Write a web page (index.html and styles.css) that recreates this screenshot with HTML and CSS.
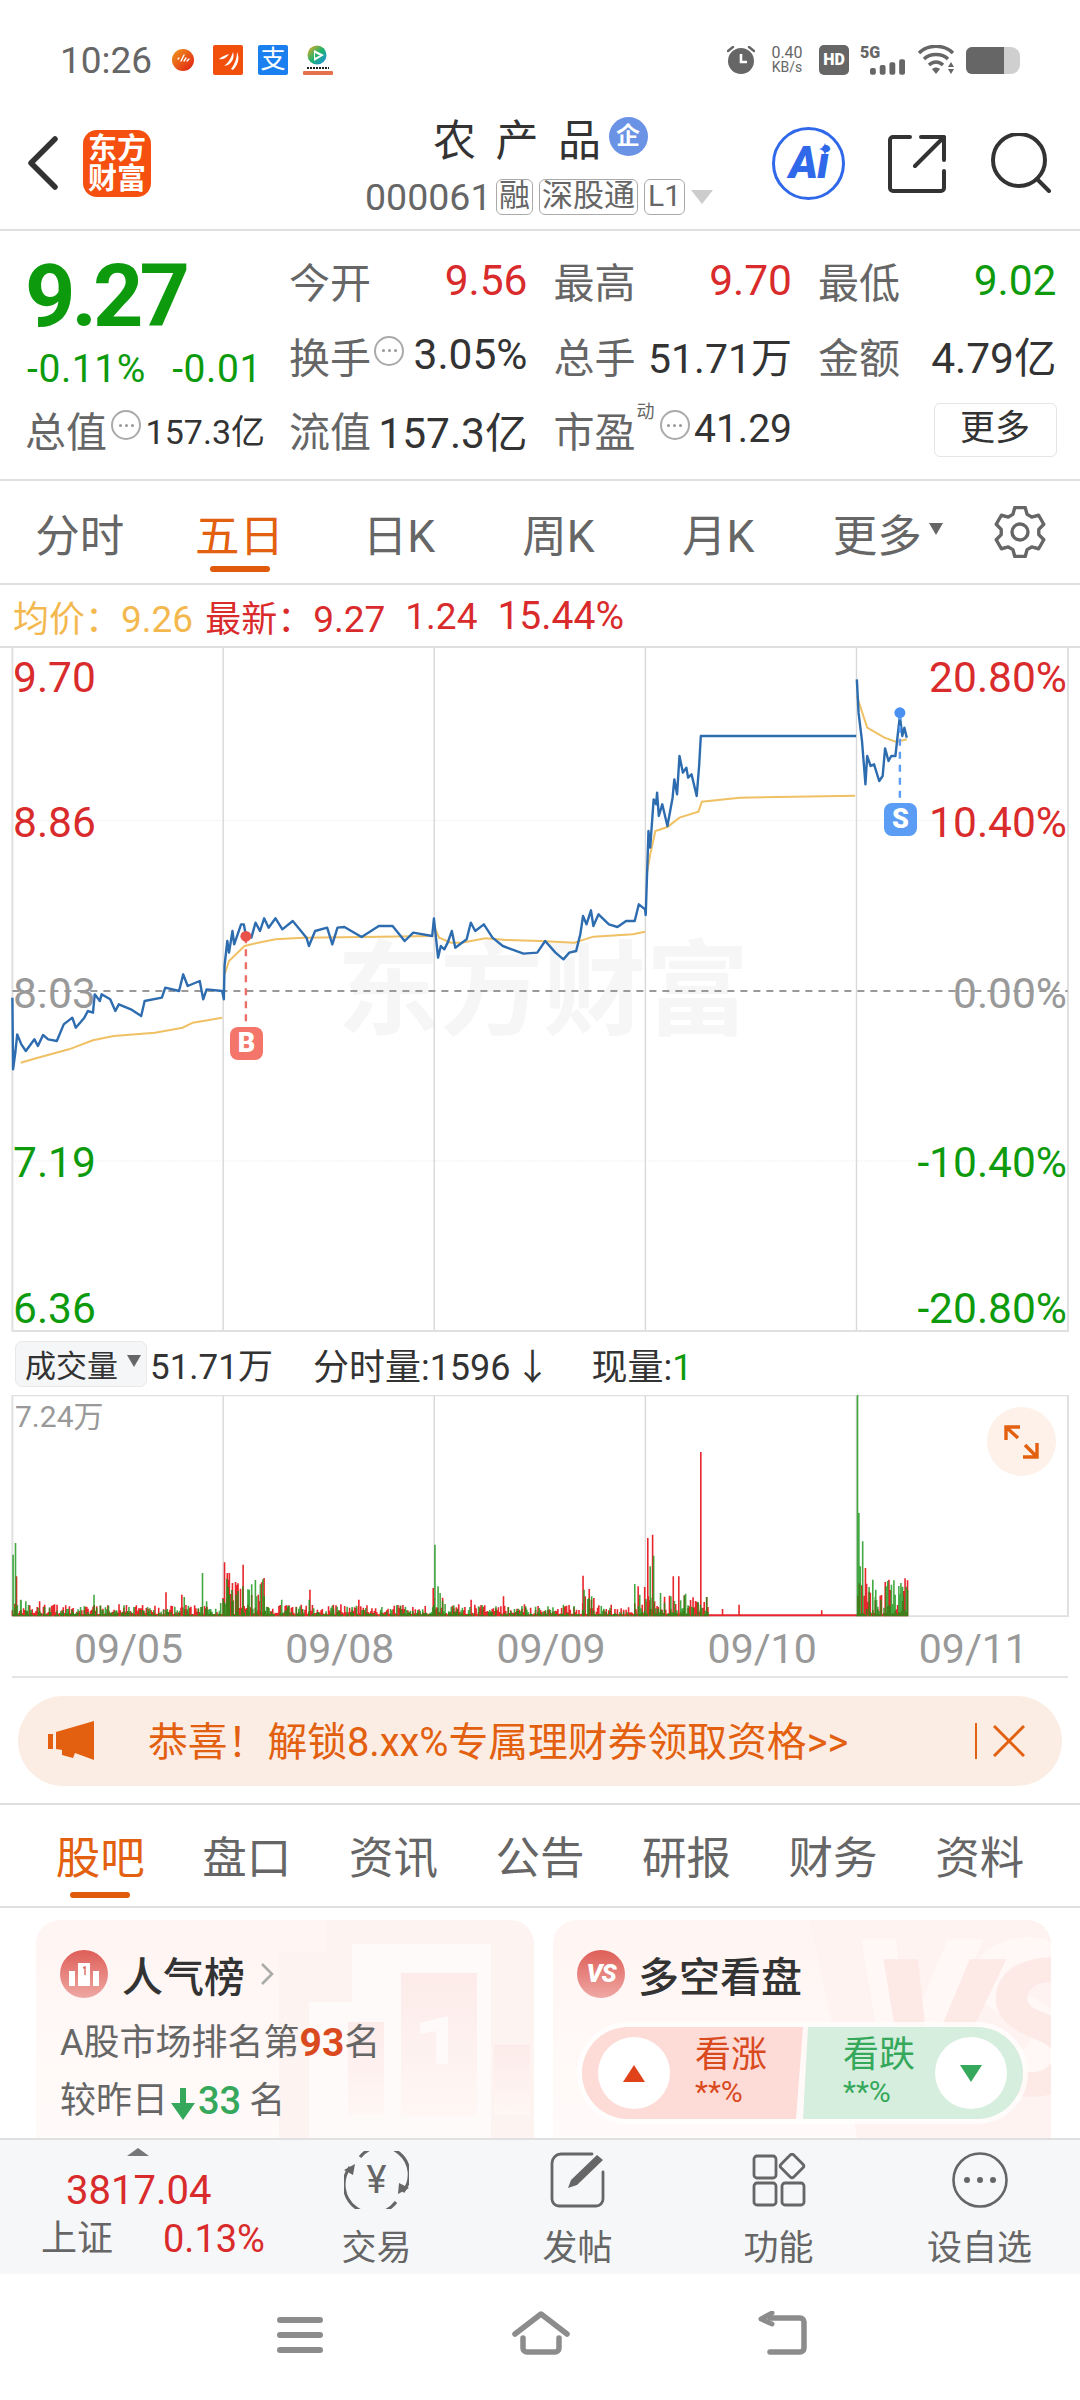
FILE: index.html
```html
<!DOCTYPE html>
<html lang="zh-CN">
<head>
<meta charset="utf-8">
<title>农产品</title>
<link rel="stylesheet" href="styles.css">
</head>
<body>
<div class="page">

<div class="status">
  <span class="time">10:26</span>
  <svg class="si si-dot" viewBox="0 0 22 22"><defs><linearGradient id="gd" x1="0" y1="0" x2="1" y2="1"><stop offset="0" stop-color="#f09a1e"/><stop offset="1" stop-color="#e01a12"/></linearGradient></defs><circle cx="11" cy="11" r="11" fill="url(#gd)"/><path d="M6 10l1-1M9 12l3-6M12 12l2-3M15 12l2-2" stroke="#fff" stroke-width="1.4" stroke-linecap="round"/></svg>
  <svg class="si si-fish" viewBox="0 0 30 30"><rect width="30" height="30" rx="2" fill="#f24e0c"/><path d="M6 14C10 11 13 10 16 9 14 12 11 15 6 14ZM11 21C14 19 18 14 20 7 22 12 19 18 15 20ZM18 24C21 20 24 14 24 7 27 13 25 20 20 25Z" fill="#fff"/></svg>
  <span class="si-pay">支</span>
  <svg class="si si-video" viewBox="0 0 30 30"><defs><linearGradient id="gv" x1="0" y1="0" x2="1" y2="1"><stop offset="0" stop-color="#f7a81e"/><stop offset=".5" stop-color="#1fb36b"/><stop offset="1" stop-color="#1c8df0"/></linearGradient></defs><circle cx="14" cy="10" r="9.5" fill="url(#gv)"/><path d="M11 5l10 5-10 6z" fill="#fff"/><path d="M12 8l5 2.4-5 2.4z" fill="#2ab06a"/><path d="M4 23h22" stroke="#222" stroke-width="2" stroke-dasharray="2 1"/><rect y="26" width="30" height="4" rx="1" fill="#e4704c"/></svg>
  <span class="status-gap"></span>
  <svg class="si si-alarm" viewBox="0 0 28 28"><path d="M1 5l5-4M27 5l-5-4" stroke="#666" stroke-width="2.4" stroke-linecap="round"/><circle cx="14" cy="15" r="13" fill="#666"/><path d="M14 8v8h6" fill="none" stroke="#fff" stroke-width="2.6"/></svg>
  <span class="speed"><span>0.40</span><span class="speed-unit">KB/s</span></span>
  <span class="hd">HD</span>
  <span class="signal"><span class="sig-5g">5G</span><svg class="sig-bars" viewBox="0 0 36 16"><rect x="0" y="9" width="6" height="7" rx="2" fill="#666"/><rect x="10" y="6" width="6" height="10" rx="2" fill="#666"/><rect x="20" y="3" width="6" height="13" rx="2" fill="#666"/><rect x="30" y="0" width="6" height="16" rx="2" fill="#666"/></svg></span>
  <svg class="si si-wifi" viewBox="0 0 37 30"><path d="M1 8C10-1 26-1 35 8M6 14C12 8 24 8 30 14M11 20C15 16 21 16 25 20" fill="none" stroke="#666" stroke-width="3.4"/><path d="M14 24c3-2 5-2 8 0l-4 5z" fill="#666"/><path d="M33 17l3 5h-6zM30 24h6l-3 5z" fill="#666"/></svg>
  <span class="battery"><span class="battery-fill"></span></span>
</div>

<header class="head">
  <div class="head-left">
    <svg class="back" viewBox="0 0 31 54"><path d="M28 3L4 27l24 24" fill="none" stroke="#333" stroke-width="5.5" stroke-linecap="round" stroke-linejoin="round"/></svg>
    <span class="logo"><span>东方</span><span>财富</span></span>
  </div>
  <div class="head-mid">
    <div class="title-row"><span class="title">农产品</span><span class="qi">企</span></div>
    <div class="code-row"><span class="code">000061</span><span class="tag">融</span><span class="tag">深股通</span><span class="tag tag-l">L1</span><span class="tri"></span></div>
  </div>
  <div class="head-right">
    <span class="ai"><span class="ai-text">Ai</span><svg class="ai-star" viewBox="0 0 12 12"><path d="M6 0l1.6 4.4L12 6 7.6 7.6 6 12 4.4 7.6 0 6l4.4-1.6z" fill="#3068ea"/></svg></span>
    <svg class="share" viewBox="0 0 58 58"><path d="M22 2H5a3 3 0 0 0-3 3v48a3 3 0 0 0 3 3h48a3 3 0 0 0 3-3V36M27 31L56 2M33 2h23v23" fill="none" stroke="#333" stroke-width="4" stroke-linecap="round" stroke-linejoin="round"/></svg>
    <svg class="search" viewBox="0 0 60 60"><circle cx="28" cy="27" r="26" fill="none" stroke="#333" stroke-width="4"/><path d="M46 46l12 12" stroke="#333" stroke-width="4" stroke-linecap="round"/></svg>
  </div>
</header>

<section class="quote">
  <div class="quote-left">
    <div class="price">9.27</div>
    <div class="change"><span>-0.11%</span><span>-0.01</span></div>
    <div class="cap"><span class="lbl">总值</span><span class="dots dots-sm"><i></i></span><span class="cap-val">157.3亿</span></div>
  </div>
  <div class="quote-grid">
    <div class="cell"><span class="lbl">今开</span><span class="up">9.56</span></div>
    <div class="cell"><span class="lbl">最高</span><span class="up">9.70</span></div>
    <div class="cell"><span class="lbl">最低</span><span class="dn">9.02</span></div>
    <div class="cell"><span class="lbl-wrap"><span class="lbl">换手</span><span class="dots"><i></i></span></span><span>3.05%</span></div>
    <div class="cell"><span class="lbl">总手</span><span class="val-sm">51.71万</span></div>
    <div class="cell"><span class="lbl">金额</span><span>4.79亿</span></div>
    <div class="cell"><span class="lbl">流值</span><span>157.3亿</span></div>
    <div class="cell"><span class="lbl-wrap"><span class="lbl">市盈</span><span class="dyn">动</span><span class="dots"><i></i></span></span><span class="val-pe">41.29</span></div>
    <div class="cell cell-end"><span class="more-btn">更多</span></div>
  </div>
</section>

<nav class="tabs">
  <span class="tab">分时</span>
  <span class="tab tab-on">五日</span>
  <span class="tab">日K</span>
  <span class="tab">周K</span>
  <span class="tab">月K</span>
  <span class="tab tab-more">更多<i class="tab-tri"></i></span>
  <svg class="gear" viewBox="0 0 52 52"><g transform="translate(26 26)"><polygon points="-7.1,-17.6 -5.2,-24.5 5.2,-24.5 7.1,-17.6 11.7,-14.95 18.6,-16.75 23.8,-7.75 18.8,-2.65 18.8,2.65 23.8,7.75 18.6,16.75 11.7,14.95 7.1,17.6 5.2,24.5 -5.2,24.5 -7.1,17.6 -11.7,14.95 -18.6,16.75 -23.8,7.75 -18.8,2.65 -18.8,-2.65 -23.8,-7.75 -18.6,-16.75 -11.7,-14.95" fill="none" stroke="#666" stroke-width="3.4" stroke-linejoin="round"/><circle r="8" fill="none" stroke="#666" stroke-width="3.4"/></g></svg>
</nav>

<div class="legend">
  <span class="yellow avg">均价：<span class="num">9.26</span></span>
  <span class="up latest">最新：<span class="num">9.27</span></span>
  <span class="up latest num">1.24</span>
  <span class="up num-wide">15.44%</span>
</div>

<section class="chart">
  <span class="watermark">东方财富</span>
  <svg class="chart-svg" viewBox="0 21 3136 2052" preserveAspectRatio="none">
    <g class="grid-dot"><path d="M36 538H3104M36 1560H3104"/></g>
    <g class="grid-v"><path d="M648 21V2073M1261 21V2073M1874 21V2073M2487 21V2073"/></g>
    <g class="grid-edge"><path d="M36 21V2070H3101V21"/></g>
    <path class="base" d="M36 1050H3100"/>
    <polyline class="avg-line" points="60,1265 110,1250 200,1225 270,1198 330,1185 450,1175 530,1160 560,1145 645,1130"/>
    <polyline class="avg-line" points="652,1000 665,960 710,915 750,905 800,895 880,890 1050,888 1258,885"/>
    <polyline class="avg-line" points="1262,860 1275,890 1310,905 1340,905 1410,892 1470,897 1568,900 1668,905 1698,895 1723,887 1838,880 1873,872"/>
    <polyline class="avg-line" points="1878,700 1888,640 1903,570 1938,558 1973,530 2028,512 2038,482 2148,470 2483,464"/>
    <polyline class="avg-line" points="2488,165 2518,260 2568,290 2603,303 2633,295"/>
    <polyline class="px-line" points="36,1070 38,1285 45,1230 50,1180 62,1210 75,1230 100,1195 110,1215 125,1182 140,1195 165,1200 185,1150 210,1130 220,1160 245,1130 255,1110 270,1115 275,1060 290,1080 295,1060 320,1075 335,1110 345,1090 380,1105 410,1125 420,1080 470,1070 480,1040 520,1050 532,1000 545,1035 580,1020 590,1075 600,1045 645,1050 650,1075 652,975 660,900 665,935 675,870 680,910 700,850 708,850 715,890 730,890 742,845 755,870 767,832 780,860 800,832 820,865 850,840 890,890 897,915 915,870 950,860 965,910 980,860 1000,858 1050,888 1100,855 1140,855 1175,900 1200,875 1255,885 1260,832 1272,950 1280,915 1290,925 1300,905 1312,870 1322,920 1355,895 1367,845 1380,870 1405,850 1430,890 1460,915 1520,938 1560,935 1583,900 1613,935 1636,955 1653,935 1673,930 1685,880 1693,825 1703,850 1716,808 1723,855 1738,820 1768,850 1793,858 1818,840 1843,840 1855,790 1873,805 1875,822 1883,570 1888,620 1898,475 1905,490 1908,455 1913,525 1923,490 1938,555 1953,470 1958,415 1966,460 1973,345 1983,395 1993,380 1998,410 2008,400 2023,465 2030,375 2035,285 2486,285"/>
    <polyline class="px-line" points="2488,115 2493,215 2503,300 2513,430 2518,345 2528,375 2538,370 2553,420 2563,405 2570,322 2580,360 2588,345 2600,345 2608,270 2613,225 2620,285 2626,260 2633,290"/>
    <path class="mark-b" d="M714 886V1160"/>
    <ellipse cx="714" cy="886" rx="16" ry="16" fill="#e8524a"/>
    <path class="mark-s" d="M2613 215V490"/>
    <ellipse cx="2613" cy="215" rx="16" ry="16" fill="#4a90f0"/>
  </svg>
  <span class="ax ax-l y1 up">9.70</span>
  <span class="ax ax-l y2 up">8.86</span>
  <span class="ax ax-l y3 flat">8.03</span>
  <span class="ax ax-l y4 dn">7.19</span>
  <span class="ax ax-l y5 dn">6.36</span>
  <span class="ax ax-r y1 up">20.80%</span>
  <span class="ax ax-r y2 up">10.40%</span>
  <span class="ax ax-r y3 flat">0.00%</span>
  <span class="ax ax-r y4 dn">-10.40%</span>
  <span class="ax ax-r y5 dn">-20.80%</span>
  <span class="badge badge-b">B</span>
  <span class="badge badge-s">S</span>
</section>

<div class="volbar">
  <span class="vol-select">成交量<i class="vol-tri"></i></span>
  <span class="vol-total">51.71万</span>
  <span class="vol-now">分时量:1596<span class="vol-arrow">↓</span></span>
  <span class="vol-cur">现量:<span class="dn">1</span></span>
</div>

<section class="vol">
  <svg class="vol-svg" viewBox="0 226 3136 666" preserveAspectRatio="none">
    <g class="grid-v"><path d="M648 226V890M1261 226V890M1874 226V890M2487 226V890"/></g>
    <g class="grid-edge"><path d="M36 890V227H3101V890H36"/></g>
    <path id="bars-red" class="bars bars-red" d=""/>
    <path id="bars-green" class="bars bars-green" d=""/>
  </svg>
  <span class="vol-max">7.24万</span>
  <span class="expand"><svg viewBox="0 0 69 69"><path d="M31 31L19 20M19 33V20h14M38 38l12 12M50 36v14H36" fill="none" stroke="#e2600f" stroke-width="3.4"/></svg></span>
</section>

<div class="dates"><span>09/05</span><span>09/08</span><span>09/09</span><span>09/10</span><span>09/11</span></div>

<div class="banner">
  <svg class="horn" viewBox="0 0 46 40"><path d="M0 13h5v15H0zM8 11L46 0v39L27 32l-2 5-11-3v-5l-6-1z" fill="#e2600f"/></svg>
  <span class="banner-text">恭喜！解锁8.xx%专属理财券领取资格&gt;&gt;</span>
  <span class="banner-sep"></span>
  <svg class="banner-x" viewBox="0 0 32 32"><path d="M1 1l30 30M31 1L1 31" stroke="#e2600f" stroke-width="3"/></svg>
</div>

<nav class="tabs2">
  <span class="tab2 tab2-on">股吧</span>
  <span class="tab2">盘口</span>
  <span class="tab2">资讯</span>
  <span class="tab2">公告</span>
  <span class="tab2">研报</span>
  <span class="tab2">财务</span>
  <span class="tab2">资料</span>
</nav>

<section class="cards">
  <article class="card">
    <svg class="podium" viewBox="0 0 498 240"><defs><linearGradient id="gp" x1="0" y1="0" x2="0" y2="1"><stop offset="0" stop-color="#fcebe9"/><stop offset="1" stop-color="#fff7f5"/></linearGradient></defs><path d="M243 32H291V0H498V240H243Z" fill="#fdf4f2"/><path d="M316 24H455V240H273V82H316Z" fill="#fffafa"/><rect x="365" y="53" width="76" height="143" fill="url(#gp)"/><rect x="312" y="102" width="36" height="93" fill="url(#gp)"/><rect x="458" y="125" width="36" height="70" fill="url(#gp)"/><path d="M384 103l28-7v48h-12v-33l-16 3z" fill="#fffafa"/></svg>
    <div class="card-head">
      <svg class="card-ic" viewBox="0 0 48 48"><defs><linearGradient id="gi" x1="0" y1="0" x2="0" y2="1"><stop offset="0" stop-color="#de5e58"/><stop offset="1" stop-color="#efa8a4"/></linearGradient></defs><circle cx="24" cy="24" r="24" fill="url(#gi)"/><path d="M9 21h6v15H9zM18 13h12v23H18zM33 21h6v15h-6z" fill="#fff"/><path d="M23 18l2-1v8" stroke="#e0706a" stroke-width="1.5" fill="none"/></svg>
      <span class="card-title">人气榜</span>
      <svg class="chev" viewBox="0 0 14 24"><path d="M2 2l10 10L2 22" fill="none" stroke="#aaa" stroke-width="2.6"/></svg>
    </div>
    <p class="card-line card-line1">A股市场排名第<b class="rank">93</b>名</p>
    <p class="card-line card-line2">较昨日<svg class="down" viewBox="0 0 24 32"><path d="M9 0h6v15h9L12 32 0 15h9z" fill="#36a85c"/></svg><span class="drop">33</span> 名</p>
  </article>
  <article class="card">
    <span class="vs-band"></span>
    <span class="vs-mark">VS</span>
    <div class="card-head">
      <span class="vs-ic">VS</span>
      <span class="card-title card-title2">多空看盘</span>
    </div>
    <div class="pill">
      <div class="pill-l">
        <span class="pill-circle"><i class="tri-up"></i></span>
        <span class="pill-text"><span>看涨</span><span class="pill-pct">**%</span></span>
      </div>
      <div class="pill-r">
        <span class="pill-text"><span>看跌</span><span class="pill-pct">**%</span></span>
        <span class="pill-circle"><i class="tri-dn"></i></span>
      </div>
    </div>
  </article>
</section>

<footer class="bar">
  <div class="index">
    <i class="index-tri"></i>
    <div class="index-num up">3817.04</div>
    <div class="index-row"><span class="lbl">上证</span><span class="up index-pct">0.13%</span></div>
  </div>
  <div class="act">
    <span class="act-ic ic-trade"><svg viewBox="0 0 65 58"><path d="M16 6A27 27 0 0 1 59 41M52 51A27 27 0 0 1 6 16" fill="none" stroke="#666" stroke-width="3"/><path d="M0 19l11-6-2 11zM65 37l-11 6 1-11z" fill="#666"/></svg><span class="yen">¥</span></span>
    <span>交易</span>
  </div>
  <div class="act">
    <span class="act-ic"><svg class="ic-post" viewBox="0 0 56 56"><path d="M42 2H11a9 9 0 0 0-9 9v36a7 7 0 0 0 7 7h37a7 7 0 0 0 7-7V20" fill="none" stroke="#666" stroke-width="2.8" stroke-linecap="round"/><path d="M18 36l3-8L47 3l6 5-26 25z" fill="#666"/></svg></span>
    <span>发帖</span>
  </div>
  <div class="act">
    <span class="act-ic"><svg class="ic-func" viewBox="0 0 54 54"><g fill="none" stroke="#666" stroke-width="2.8"><rect x="2" y="3" width="22" height="22" rx="3"/><rect x="2" y="30" width="22" height="22" rx="3"/><rect x="30" y="30" width="22" height="22" rx="3"/><rect x="31" y="4" width="18" height="18" rx="2.5" transform="rotate(45 40 13)"/></g></svg></span>
    <span>功能</span>
  </div>
  <div class="act">
    <span class="act-ic"><svg class="ic-more" viewBox="0 0 56 56"><circle cx="28" cy="28" r="26.5" fill="none" stroke="#666" stroke-width="2.6"/><circle cx="15" cy="28" r="3" fill="#666"/><circle cx="28" cy="28" r="3" fill="#666"/><circle cx="41" cy="28" r="3" fill="#666"/></svg></span>
    <span>设自选</span>
  </div>
</footer>

<div class="sysnav">
  <svg class="nav-menu" viewBox="0 0 46 36"><path d="M3 3h40M3 18h40M3 33h40" stroke="#8c8c8c" stroke-width="6" stroke-linecap="round"/></svg>
  <svg class="nav-home" viewBox="0 0 58 44"><path d="M3 23L29 3l26 20M11 27v10a4 4 0 0 0 4 4h28a4 4 0 0 0 4-4V27" fill="none" stroke="#8c8c8c" stroke-width="5.5" stroke-linecap="round" stroke-linejoin="round"/></svg>
  <svg class="nav-back" viewBox="0 0 50 44"><path d="M12 7h30a4 4 0 0 1 4 4v26a4 4 0 0 1-4 4H12" fill="none" stroke="#8c8c8c" stroke-width="5.5" stroke-linecap="round"/><path d="M14 2L3 8l11 5" fill="none" stroke="#8c8c8c" stroke-width="5" stroke-linecap="round" stroke-linejoin="round"/></svg>
</div>

</div>
<script src="chart.js"></script>
</body>
</html>
```
FILE: styles.css
```css
* { box-sizing: border-box; margin: 0; padding: 0; }
html, body { background: #fff; }
body { width: 1080px; height: 2400px; overflow: hidden; font-family: Roboto, "Noto Sans CJK SC", sans-serif; color: #333; }
.page { width: 1080px; height: 2400px; overflow: hidden; display: flex; flex-direction: column; }
i { display: block; font-style: normal; }
.up { color: #d92b2b; }
.dn { color: #0d9b0d; }
.flat { color: #999; }
.yellow { color: #f3b84e; }
.lbl { color: #666; font-size: 41px; white-space: nowrap; flex: none; }

/* status bar */
.status { height: 90px; padding: 30px 60px 0; display: flex; align-items: center; color: #666; flex: none; }
.time { font-size: 37px; width: 112px; }
.si { display: block; flex: none; }
.si-dot { width: 22px; height: 22px; margin-right: 19px; }
.si-fish { width: 30px; height: 30px; margin-right: 15px; }
.si-pay { width: 30px; height: 30px; margin-right: 15px; background: #1b7ff0; color: #fff; font-size: 25px; line-height: 30px; text-align: center; border-radius: 2px; flex: none; }
.si-video { width: 30px; height: 30px; }
.status-gap { flex: 1; }
.si-alarm { width: 28px; height: 28px; margin-right: 13px; }
.speed { display: flex; flex-direction: column; align-items: center; width: 38px; font-size: 16px; line-height: 14px; margin-right: 13px; }
.speed-unit { font-size: 14px; }
.hd { width: 30px; height: 30px; border-radius: 5px; background: #666; color: #fff; font-size: 16px; font-weight: 900; text-align: center; line-height: 30px; margin-right: 11px; flex: none; }
.signal { width: 45px; height: 30px; display: flex; flex-direction: column; margin-right: 13px; flex: none; }
.sig-5g { font-size: 16px; font-weight: 900; line-height: 15px; }
.sig-bars { width: 35px; height: 16px; align-self: flex-end; margin-top: -1px; }
.si-wifi { width: 37px; height: 30px; margin-right: 11px; }
.battery { width: 54px; height: 27px; border-radius: 6px 9px 9px 6px; background: #cfcfcf; display: block; flex: none; }
.battery-fill { display: block; width: 38px; height: 27px; background: #666; border-radius: 6px 0 0 6px; }

/* header */
.head { height: 141px; flex: none; border-bottom: 2px solid #e0e0e0; display: flex; }
.head-left { width: 365px; padding: 40px 0 0 27px; display: flex; align-items: flex-start; gap: 25px; }
.back { width: 31px; height: 54px; margin-top: 6px; }
.logo { width: 68px; height: 67px; border-radius: 14px; background: #f5500f; color: #fff; font-size: 29px; font-weight: 700; line-height: 30px; display: flex; flex-direction: column; align-items: center; justify-content: center; }
.head-mid { width: 355px; padding-top: 23px; }
.title-row { display: flex; align-items: center; padding-left: 68px; height: 56px; }
.title { font-size: 43px; letter-spacing: 19.5px; color: #333; line-height: 56px; }
.qi { width: 39px; height: 39px; border-radius: 50%; background: #6a93e6; color: #fff; font-size: 24px; font-weight: 700; text-align: center; line-height: 39px; margin: -10px 0 0 -12px; }
.code-row { display: flex; align-items: center; height: 38px; margin-top: 9px; }
.code { font-size: 37.5px; color: #666; margin-right: 6px; width: 125px; }
.tag { height: 36px; border: 1.5px solid #aaa; border-radius: 6px; font-size: 31px; line-height: 31px; color: #666; padding: 0 2px; margin-right: 6px; white-space: nowrap; }
.tag-l { padding: 0 3px; font-size: 30px; margin-right: 6px; }
.tri { width: 0; height: 0; border-left: 11px solid transparent; border-right: 11px solid transparent; border-top: 14px solid #ccc; }
.head-right { flex: 1; display: flex; align-items: flex-start; padding-top: 37px; }
.ai { position: relative; width: 73px; height: 73px; border-radius: 50%; border: 3.5px solid #3068ea; margin-left: 52px; color: #3068ea; font-size: 44px; font-weight: 900; font-style: italic; text-align: center; line-height: 66px; flex: none; }
.ai-text { letter-spacing: -1px; }
.ai-star { position: absolute; right: 11px; top: 13px; width: 12px; height: 12px; }
.share { width: 58px; height: 58px; margin: 8px 0 0 43px; flex: none; }
.search { width: 60px; height: 60px; margin: 6px 0 0 45px; flex: none; }

/* quote */
.quote { height: 250px; flex: none; border-bottom: 2px solid #e0e0e0; padding: 15px 0 0 27px; display: flex; gap: 27px; font-size: 42.5px; }
.quote-left { width: 235px; display: flex; flex-direction: column; }
.price { height: 100px; line-height: 100px; font-size: 88px; font-weight: 700; color: #0d9b0d; letter-spacing: -4px; margin-left: -2px; }
.change { height: 46px; line-height: 46px; display: flex; justify-content: space-between; font-size: 39px; letter-spacing: .6px; color: #0d9b0d; }
.cap { height: 74px; display: flex; align-items: center; margin-left: -2px; }
.cap-val { font-size: 34px; margin-left: auto; margin-right: -3px; }
.quote-grid { display: grid; grid-template-columns: repeat(3, 238.5px); grid-auto-rows: 74.5px; column-gap: 26px; margin-top: -3px; }
.cell { display: flex; align-items: center; justify-content: space-between; white-space: nowrap; }
.cell-end { justify-content: flex-end; padding-top: 2px; }
.val-sm { font-size: 41px; }
.val-pe { font-size: 39px; }
.lbl-wrap { display: flex; align-items: center; flex: none; }
.dots { width: 30px; height: 30px; border: 2px solid #aaa; border-radius: 50%; margin: 0 0 8px 3px; display: flex; align-items: center; justify-content: center; flex: none; }
.dots i { width: 3px; height: 3px; border-radius: 50%; background: #999; box-shadow: -6px 0 0 #999, 6px 0 0 #999; }
.dots-sm { margin-left: 4px; }
.dyn { font-size: 18px; color: #666; line-height: 18px; align-self: flex-start; margin: 4px 0 0 1px; width: 20px; flex: none; }
.more-btn { width: 123px; height: 54px; border: 1.5px solid #e5e5e5; border-radius: 6px; font-size: 35px; color: #333; text-align: center; line-height: 50px; }

/* period tabs */
.tabs { height: 104px; flex: none; border-bottom: 2px solid #e0e0e0; display: flex; align-items: center; }
.tab { position: relative; width: 159.6px; text-align: center; font-size: 44.5px; color: #666; display: flex; justify-content: center; align-items: center; flex: none; }
.tab-on { color: #e2600f; }
.tab-on::after { content: ""; position: absolute; left: 50px; width: 60px; height: 6px; top: 66px; border-radius: 3px; background: #e05a0c; }
.tab-more { padding-left: 20px; }
.tab-tri { width: 0; height: 0; border-left: 7.5px solid transparent; border-right: 7.5px solid transparent; border-top: 12px solid #666; margin: -6px 0 0 7px; }
.gear { width: 52px; height: 52px; margin: 0 0 0 36px; flex: none; }

/* legend */
.legend { height: 63px; flex: none; border-bottom: 2px solid #e0e0e0; padding: 1px 0 0 13px; display: flex; align-items: center; font-size: 36px; white-space: nowrap; }
.num { font-size: 37px; }
.num-wide { font-size: 39px; }
.avg { margin-right: 12px; }
.latest { margin-right: 20px; }

/* price chart */
.chart { position: relative; height: 684px; flex: none; }
.chart-svg, .vol-svg { position: absolute; left: 0; top: 0; width: 1080px; height: 100%; display: block; }
.watermark { position: absolute; left: 337px; top: 284px; font-size: 103px; line-height: 120px; font-weight: 700; color: #f6f6f6; white-space: nowrap; }
.grid-dot path { fill: none; stroke: #e2e2e2; stroke-width: 1; stroke-dasharray: 1 2; vector-effect: non-scaling-stroke; }
.grid-v path { fill: none; stroke: #d8d8d8; stroke-width: 1.4; vector-effect: non-scaling-stroke; }
.grid-edge path { fill: none; stroke: #e0e0e0; stroke-width: 2; vector-effect: non-scaling-stroke; }
.base { fill: none; stroke: #999; stroke-width: 2; stroke-dasharray: 7 6; vector-effect: non-scaling-stroke; }
.avg-line { fill: none; stroke: #efc064; stroke-width: 2; vector-effect: non-scaling-stroke; }
.px-line { fill: none; stroke: #2e6cb0; stroke-width: 2.4; stroke-linejoin: round; vector-effect: non-scaling-stroke; }
.mark-b { fill: none; stroke: #ea6f68; stroke-width: 2.4; stroke-dasharray: 7 6; vector-effect: non-scaling-stroke; }
.mark-s { fill: none; stroke: #5b9cf5; stroke-width: 2.4; stroke-dasharray: 7 6; vector-effect: non-scaling-stroke; }
.ax { position: absolute; font-size: 42.5px; line-height: 48px; }
.ax-l { left: 13px; }
.ax-r { right: 13px; }
.y1 { top: 6px; }
.y2 { top: 151px; }
.y3 { top: 322px; }
.y4 { top: 491px; }
.y5 { top: 637px; }
.badge { position: absolute; width: 33px; height: 33px; border-radius: 8px; color: #fff; font-size: 27px; font-weight: 900; text-align: center; line-height: 33px; }
.badge-b { left: 230px; top: 379px; background: #f4766a; }
.badge-s { left: 884px; top: 155px; background: #5b9cf5; }

/* volume */
.volbar { height: 63px; flex: none; display: flex; align-items: center; font-size: 36px; color: #333; padding-left: 15px; white-space: nowrap; }
.vol-select { width: 132px; height: 46px; background: #f5f6f8; border: 1.5px solid #e8e8e8; border-radius: 7px; font-size: 31px; display: flex; align-items: center; padding-left: 9px; margin-right: 3px; }
.vol-tri { width: 0; height: 0; border-left: 7.5px solid transparent; border-right: 7.5px solid transparent; border-top: 12px solid #666; margin: -6px 0 0 9px; }
.vol-total { font-size: 35px; margin-right: 40px; }
.vol-now { margin-right: 41px; }
.vol-arrow { margin-left: 4px; }
.vol { position: relative; height: 222px; flex: none; }
.bars { fill: none; stroke-width: 1.6; vector-effect: non-scaling-stroke; }
.bars-red { stroke: #e8262c; }
.bars-green { stroke: #149414; stroke-opacity: .8; }
.vol-max { position: absolute; left: 15px; top: 4px; font-size: 30px; line-height: 36px; color: #999; }
.expand { position: absolute; left: 987px; top: 12px; width: 69px; height: 69px; border-radius: 50%; background: #fdf1e9; }
.expand svg { display: block; width: 69px; height: 69px; }
.dates { height: 61px; flex: none; margin: 0 12px; padding: 5px 0 0 11px; border-bottom: 2px solid #e5e5e5; display: flex; font-size: 41px; color: #999; }
.dates span { width: 211.2px; text-align: center; line-height: 54px; flex: none; }

/* banner */
.banner { height: 90px; flex: none; margin: 18px 18px 17px; border-radius: 45px; background: #fcede4; display: flex; align-items: center; padding-left: 30px; color: #e2600f; }
.horn { width: 46px; height: 40px; margin-right: 54px; flex: none; }
.banner-text { font-size: 39.8px; width: 827px; white-space: nowrap; padding-bottom: 5px; }
.banner-sep { width: 1.6px; height: 36px; background: #e2600f; flex: none; margin-right: 16px; }
.banner-x { width: 32px; height: 32px; flex: none; }

/* detail tabs */
.tabs2 { height: 105px; flex: none; border-top: 2px solid #e0e0e0; border-bottom: 2px solid #e0e0e0; padding: 0 27px; display: flex; align-items: center; }
.tab2 { position: relative; width: 146.57px; text-align: center; font-size: 44.5px; color: #666; flex: none; padding-bottom: 2px; }
.tab2-on { color: #e2600f; }
.tab2-on::after { content: ""; position: absolute; left: 43px; top: 70px; width: 60px; height: 6px; border-radius: 3px; background: #e05a0c; }

/* cards */
.cards { height: 230px; flex: none; overflow: hidden; padding: 12px 0 0 36px; display: flex; gap: 19px; }
.card { position: relative; width: 498px; height: 260px; flex: none; border-radius: 24px; overflow: hidden; background: linear-gradient(#fff5f3, #fffcfb); padding: 30px 0 0 24px; }
.podium { position: absolute; left: 0; top: 0; width: 498px; height: 240px; }
.card-head { position: relative; display: flex; align-items: center; height: 48px; }
.card-ic { width: 48px; height: 48px; flex: none; }
.card-title { font-size: 41px; font-weight: 500; color: #333; margin-left: 14px; white-space: nowrap; }
.chev { width: 14px; height: 24px; margin-left: 15px; }
.card-line { position: relative; font-size: 36px; color: #666; line-height: 48px; white-space: nowrap; display: flex; align-items: center; }
.card-line1 { margin-top: 21px; }
.card-line2 { margin-top: 10px; }
.rank { color: #d94a1e; font-weight: 700; font-size: 39px; }
.down { width: 24px; height: 32px; margin: 6px 3px 0 3px; }
.drop { color: #36a85c; font-size: 38px; font-weight: 500; margin-right: 8px; }
.vs-band { position: absolute; left: 256px; top: 0; width: 242px; height: 240px; background: #fef3f1; clip-path: polygon(0 0, 100% 0, 100% 100%, 22% 100%); }
.vs-mark { position: absolute; left: 318px; top: -30px; font-size: 190px; line-height: 280px; font-weight: 900; font-style: italic; color: #fde9e6; letter-spacing: -14px; white-space: nowrap; text-shadow: -22px -20px 0 #fff8f6; }
.vs-ic { position: relative; width: 48px; height: 48px; border-radius: 50%; background: linear-gradient(#de5e58, #efa8a4); color: #fff; font-size: 25px; font-weight: 900; font-style: italic; text-align: center; line-height: 48px; letter-spacing: -1px; flex: none; }
.card-title2 { margin-left: 13px; }
.pill { position: relative; width: 441px; height: 92px; margin: 29px 0 0 5px; border-radius: 46px; overflow: hidden; display: flex; box-shadow: 0 0 0 5px rgba(255, 255, 255, .7); }
.pill-l, .pill-r { display: flex; align-items: center; height: 92px; flex: none; }
.pill-l { width: 221px; background: #fddcd8; color: #d94a1e; padding-left: 16px; gap: 25px; clip-path: polygon(0 0, 100% 0, 214px 100%, 0 100%); }
.pill-r { width: 220px; background: #d6eedd; color: #36a85c; padding-right: 16px; justify-content: flex-end; gap: 20px; clip-path: polygon(5px 0, 100% 0, 100% 100%, 0 100%); }
.pill-circle { width: 72px; height: 72px; border-radius: 50%; background: #fff; display: flex; align-items: center; justify-content: center; flex: none; }
.pill-text { display: flex; flex-direction: column; font-size: 36px; line-height: 38px; }
.pill-pct { font-size: 30px; line-height: 36px; }
.tri-up { width: 0; height: 0; border-left: 11px solid transparent; border-right: 11px solid transparent; border-bottom: 17px solid #e0431a; }
.tri-dn { width: 0; height: 0; border-left: 11px solid transparent; border-right: 11px solid transparent; border-top: 17px solid #36a85c; }

/* bottom bar */
.bar { height: 136px; flex: none; background: #f6f7f9; border-top: 2px solid #e0e0e0; display: flex; position: relative; }
.index { width: 276px; padding: 8px 0 0 41px; flex: none; font-size: 36px; }
.index-tri { width: 0; height: 0; border-left: 11px solid transparent; border-right: 11px solid transparent; border-bottom: 8px solid #777; margin-left: 86px; }
.index-num { font-size: 40px; line-height: 52px; margin: 9px 0 0 25px; }
.index-row { display: flex; gap: 50px; line-height: 44px; }
.index-row .lbl { font-size: 36px; }
.index-pct { font-size: 38px; }
.act { width: 201px; flex: none; display: flex; flex-direction: column; align-items: center; font-size: 35px; color: #666; padding-top: 11px; }
.act-ic { position: relative; height: 58px; display: flex; align-items: center; justify-content: center; margin-bottom: 10px; }
.ic-trade { width: 65px; }
.ic-trade svg { display: block; width: 65px; height: 58px; }
.yen { position: absolute; left: 0; right: 0; top: 0; text-align: center; font-size: 38px; line-height: 58px; font-weight: 400; }
.ic-post { width: 56px; height: 56px; display: block; }
.ic-func { width: 54px; height: 54px; display: block; }
.ic-more { width: 56px; height: 56px; display: block; }

/* system nav */
.sysnav { height: 126px; flex: none; position: relative; display: flex; align-items: flex-start; padding: 43px 0 0 277px; }
.nav-menu { width: 46px; height: 36px; margin-right: 189px; flex: none; }
.nav-home { width: 58px; height: 44px; margin: -6px 188px 0 0; flex: none; }
.nav-back { width: 50px; height: 44px; margin-top: -6px; flex: none; }
```
FILE: chart.js
```js
// Draws the five-day volume bars from their main peaks and a seeded tail of small trades.
(function () {
  var BASE = 890;
  var redPeaks = [[48,770],[115,845],[150,858],[482,818],[528,825],[652,728],[660,760],[666,760],[675,790],[706,735],[750,825],[900,810],[968,855],[1042,840],[1258,805],[1368,840],[1462,830],[1693,768],[1711,808],[1853,800],[1881,655],[1895,645],[1955,770],[1971,770],[2035,397],[2146,855],[2098,868],[2386,872],[2513,745]];
  var greenPeaks = [[45,670],[38,705],[60,840],[75,845],[273,825],[315,858],[535,832],[588,760],[600,845],[660,810],[685,825],[705,800],[745,830],[818,840],[898,840],[1035,858],[1263,675],[1272,800],[1278,820],[1636,855],[1696,810],[1718,830],[1898,708],[1888,740],[1918,820],[1948,830],[2490,226],[2494,580],[2505,665],[2498,740],[2543,810],[2573,800],[2616,790],[2623,830],[2558,840]];
  var clusters = [[36,90,45],[640,770,110],[1258,1300,70],[1690,1730,55],[1840,1900,100],[1900,2060,65],[2488,2636,110]];
  var seed = 20250911;
  function rnd() { seed = (seed * 1664525 + 1013904223) >>> 0; return seed / 4294967296; }
  function env(x) {
    for (var i = 0; i < clusters.length; i++) {
      if (x >= clusters[i][0] && x <= clusters[i][1]) return clusters[i][2];
    }
    return 30;
  }
  var red = "", green = "";
  function bar(x, top) { return "M" + x.toFixed(1) + " " + BASE + "V" + Math.round(top); }
  for (var x = 36; x <= 2636; x += 3.6) {
    if (x > 2058 && x < 2486) { red += bar(x, BASE - 6); continue; }
    var e = env(x);
    red += bar(x, BASE - (6 + Math.pow(rnd(), 2) * e));
    if (rnd() > 0.2) green += bar(x, BASE - (3 + Math.pow(rnd(), 2.2) * e));
  }
  redPeaks.forEach(function (p) { red += bar(p[0], p[1]); });
  greenPeaks.forEach(function (p) { green += bar(p[0], p[1]); });
  document.getElementById("bars-red").setAttribute("d", red);
  document.getElementById("bars-green").setAttribute("d", green);
})();
```
